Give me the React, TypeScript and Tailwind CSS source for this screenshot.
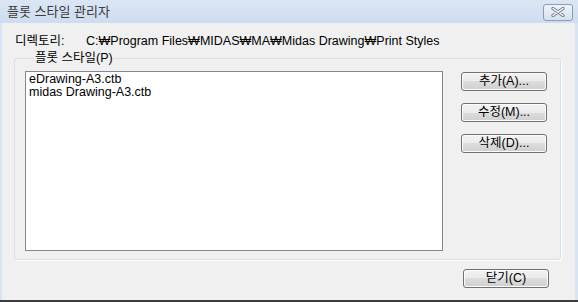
import React from "react";

const font = { fontFamily: '"Liberation Sans", "Noto Sans CJK KR", sans-serif' };

function WinButton({ label }: { label: string }) {
  return (
    <button className="w-[86px] h-[19px] rounded-[3px] border border-[#707070] bg-[linear-gradient(#f2f2f2_0%,#ebebeb_50%,#dddddd_50%,#cfcfcf_100%)] shadow-[inset_0_0_0_1px_#fcfcfc] text-[12.5px] leading-none text-black flex items-center justify-center">
      {label}
    </button>
  );
}

export default function App() {
  const styles = ["eDrawing-A3.ctb", "midas Drawing-A3.ctb"];

  return (
    <div
      className="w-[578px] h-[302px] flex flex-col bg-[#d9e4f2] overflow-hidden"
      style={font}
    >
      {/* Title bar */}
      <div className="h-[23px] shrink-0 flex items-center justify-between pl-[7px] pr-[5px] bg-[linear-gradient(#dbe6f4,#cddcef)]">
        <span className="text-[13px] text-[#3a3a3a] leading-none">플롯 스타일 관리자</span>
        <div className="mt-[1px] w-[30px] h-[17px] rounded-[3px] border border-[#8d9cb3] bg-[linear-gradient(#eef3fa,#d6e1ef)] flex items-center justify-center">
          <svg width="14" height="10" viewBox="0 0 14 10">
            <path d="M2 1.5 L12 8.5 M12 1.5 L2 8.5" stroke="#6f7a88" strokeWidth="3.2" strokeLinecap="round" />
            <path d="M2 1.5 L12 8.5 M12 1.5 L2 8.5" stroke="#ffffff" strokeWidth="1.4" strokeLinecap="round" />
          </svg>
        </div>
      </div>

      {/* Client area */}
      <div className="flex-1 ml-[2px] mr-[3px] bg-[#f0f0f0] flex flex-col pl-[12px] pr-[14px]">
        <div className="mt-[12px] flex items-center text-[12.5px] leading-[12px] text-black">
          <span className="w-[72px] pl-[1px]">디렉토리:</span>
          <span>C:₩Program Files₩MIDAS₩MA₩Midas Drawing₩Print Styles</span>
        </div>

        <fieldset className="mt-[5px] border border-[#d5dfe5] rounded-[3px] shadow-[1px_1px_0_#ffffff] pl-[10px] pr-[13px] pb-[8px]">
          <legend className="ml-[9px] px-[1px] text-[12.5px] leading-[12px] text-black">플롯 스타일(P)</legend>
          <div className="flex h-[187px] pt-[7px]">
            <div className="w-[418px] h-full bg-white border border-[#828790] px-[3px] pt-[1px] text-[12.5px] leading-[13px] text-black">
              {styles.map((s) => (
                <div key={s}>{s}</div>
              ))}
            </div>
            <div className="ml-auto mt-[1px] flex flex-col gap-[12px]">
              <WinButton label="추가(A)..." />
              <WinButton label="수정(M)..." />
              <WinButton label="삭제(D)..." />
            </div>
          </div>
        </fieldset>

        <div className="mt-[9px] flex justify-end pr-[12px]">
          <WinButton label="닫기(C)" />
        </div>
      </div>

      <div className="h-[2px] shrink-0 bg-[#3c3c3c]" />
    </div>
  );
}
